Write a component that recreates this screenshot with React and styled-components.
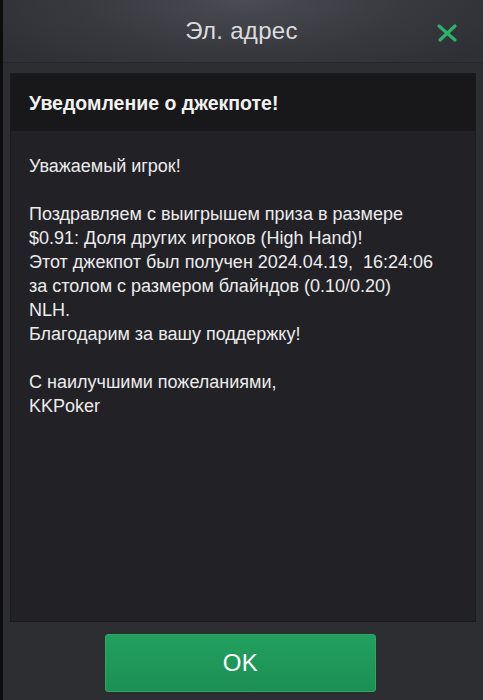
import React from "react";
import styled, { createGlobalStyle } from "styled-components";

const Global = createGlobalStyle`
  html, body { margin: 0; padding: 0; background: #2c2d31; }
  body { font-family: "Liberation Sans", Arial, sans-serif; }
`;

const Screen = styled.div`
  width: 483px;
  height: 700px;
  display: flex;
  flex-direction: column;
  background: #2d2e32;
  border-left: 3px solid #0c0c0d;
  box-sizing: border-box;
  overflow: hidden;
`;

const Header = styled.div`
  height: 62px;
  flex: none;
  position: relative;
  display: flex;
  align-items: center;
  justify-content: center;
  background: radial-gradient(ellipse 60% 140% at 50% 0%, #4a4c53 0%, #393a40 55%, #2f3035 100%);
  border-bottom: 1px solid #26272b;
`;

const Title = styled.div`
  color: #dcdcde;
  font-size: 24px;
  letter-spacing: 0.3px;
  margin-right: 3px;
`;

const Close = styled.button`
  position: absolute;
  right: 25px;
  top: 22px;
  width: 22px;
  height: 22px;
  padding: 0;
  border: 0;
  background: none;
  display: flex;
`;

const Panel = styled.div`
  margin: 10px 7px 0 7px;
  height: 547px;
  display: flex;
  flex-direction: column;
  background: #222226;
  border: 1px solid #1b1b1e;
`;

const PanelHead = styled.div`
  height: 57px;
  flex: none;
  display: flex;
  align-items: center;
  padding: 1px 18px 0;
  box-sizing: border-box;
  background: #18181a;
  color: #f2f2f2;
  font-size: 19.5px;
  font-weight: 700;
`;

const Body = styled.div`
  padding: 23px 18px;
  color: #ececec;
  font-size: 18px;
  line-height: 24px;
  white-space: pre-wrap;
`;

const Footer = styled.div`
  flex: 1;
  display: flex;
  justify-content: center;
  align-items: flex-start;
  padding-top: 12px;
  padding-right: 5px;
`;

const OkButton = styled.button`
  width: 271px;
  height: 58px;
  border: 1px solid #2aa866;
  border-radius: 3px;
  background: linear-gradient(180deg, #22a05f 0%, #1c9054 100%);
  color: #ffffff;
  font-family: "Liberation Sans", Arial, sans-serif;
  font-size: 24px;
  letter-spacing: 0.5px;
`;

const text = `Уважаемый игрок!

Поздравляем с выигрышем приза в размере
$0.91: Доля других игроков (High Hand)!
Этот джекпот был получен 2024.04.19,  16:24:06
за столом с размером блайндов (0.10/0.20)
NLH.
Благодарим за вашу поддержку!

С наилучшими пожеланиями,
KKPoker`;

export default function App() {
  return (
    <>
      <Global />
      <Screen>
        <Header>
          <Title>Эл. адрес</Title>
          <Close aria-label="close">
            <svg width="22" height="22" viewBox="0 0 22 22">
              <path d="M3 4 L19 18 M19 4 L4 18" stroke="#2cb36a" strokeWidth="3.2" strokeLinecap="round" />
            </svg>
          </Close>
        </Header>
        <Panel>
          <PanelHead>Уведомление о джекпоте!</PanelHead>
          <Body>{text}</Body>
        </Panel>
        <Footer>
          <OkButton>OK</OkButton>
        </Footer>
      </Screen>
    </>
  );
}
